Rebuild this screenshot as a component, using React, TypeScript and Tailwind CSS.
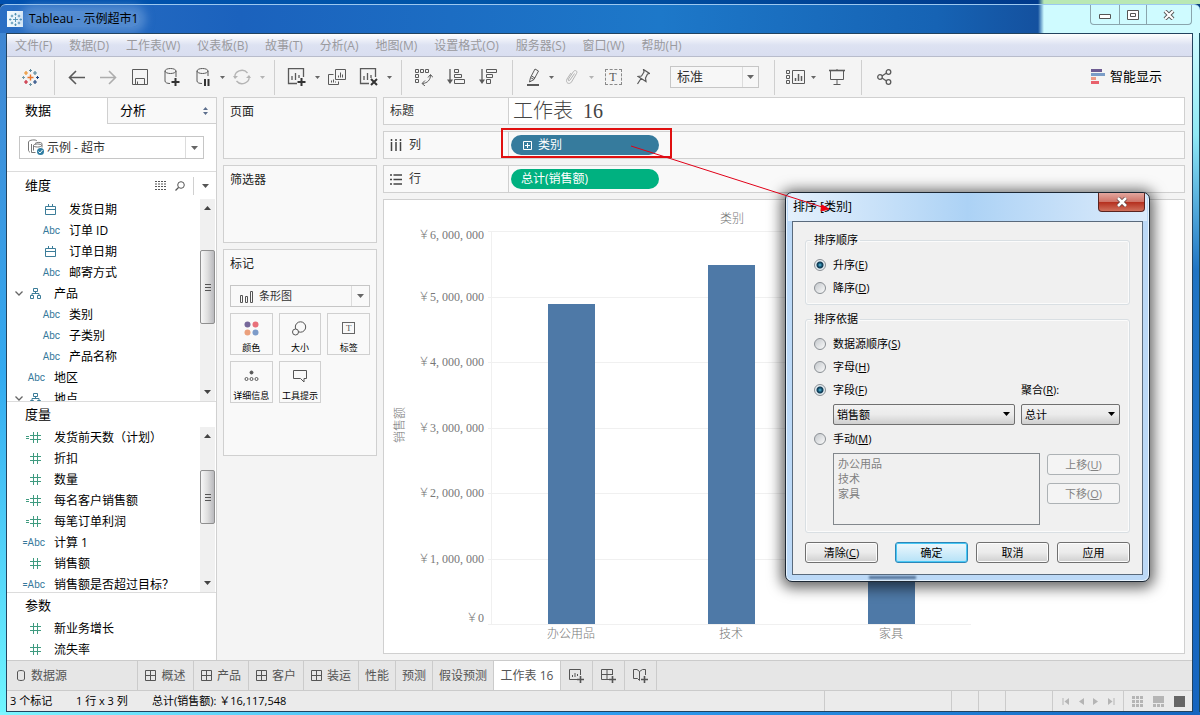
import type { ReactNode } from 'react'
import clsx from 'clsx'

type FieldKind = 'date' | 'text' | 'tree' | 'num' | 'calcNum' | 'calcText'
type Field = { name: string; kind: FieldKind; nested?: boolean }

const DIMENSIONS: Field[] = [
  { name: '发货日期', kind: 'date', nested: true },
  { name: '订单 ID', kind: 'text', nested: true },
  { name: '订单日期', kind: 'date', nested: true },
  { name: '邮寄方式', kind: 'text', nested: true },
  { name: '产品', kind: 'tree' },
  { name: '类别', kind: 'text', nested: true },
  { name: '子类别', kind: 'text', nested: true },
  { name: '产品名称', kind: 'text', nested: true },
  { name: '地区', kind: 'text' },
  { name: '地点', kind: 'tree' },
]

const MEASURES: Field[] = [
  { name: '发货前天数（计划）', kind: 'calcNum' },
  { name: '折扣', kind: 'num' },
  { name: '数量', kind: 'num' },
  { name: '每名客户销售额', kind: 'calcNum' },
  { name: '每笔订单利润', kind: 'calcNum' },
  { name: '计算 1', kind: 'calcText' },
  { name: '销售额', kind: 'num' },
  { name: '销售额是否超过目标？', kind: 'calcText' },
]

const PARAMETERS: Field[] = [
  { name: '新业务增长', kind: 'num' },
  { name: '流失率', kind: 'num' },
]

const MENU = ['文件(F)', '数据(D)', '工作表(W)', '仪表板(B)', '故事(T)', '分析(A)', '地图(M)', '设置格式(O)', '服务器(S)', '窗口(W)', '帮助(H)']

const TICKS = [
  { label: '￥6, 000, 000', y: 231, textY: 239 },
  { label: '￥5, 000, 000', y: 297, textY: 301 },
  { label: '￥4, 000, 000', y: 362, textY: 366 },
  { label: '￥3, 000, 000', y: 428, textY: 432 },
  { label: '￥2, 000, 000', y: 493, textY: 497 },
  { label: '￥1, 000, 000', y: 559, textY: 563 },
  { label: '￥0', y: 624, textY: 622 },
]

const BARS = [
  { name: '办公用品', x: 548, top: 304 },
  { name: '技术', x: 708, top: 265 },
  { name: '家具', x: 868, top: 316 },
]

/* ---------- small drawing helpers ---------- */

const Glyph = ({ w, h, className, children }: { w: number; h: number; className?: string; children: ReactNode }) => (
  <svg width={w} height={h} viewBox={`0 0 ${w} ${h}`} fill="none" stroke="currentColor" aria-hidden="true" className={clsx('shrink-0', className)}>
    {children}
  </svg>
)

const Caret = ({ className }: { className?: string }) => (
  <Glyph w={7} h={4} className={className}>
    <path d="M0 0h7L3.5 4z" fill="currentColor" stroke="none" />
  </Glyph>
)

const TableauMark = () => (
  <Glyph w={17} h={17}>
    <path d="M8.5 5.5v6M5.5 8.5h6" stroke="#e8762c" strokeWidth="1.4" />
    <path d="M8.5 0v3M7 1.5h3" stroke="#5b879b" />
    <path d="M13 2v4M11 4h4" stroke="#59879b" strokeWidth="1.2" />
    <path d="M4 2v4M2 4h4" stroke="#eb912c" strokeWidth="1.2" />
    <path d="M15.5 7v3M14 8.5h3" stroke="#1f447e" />
    <path d="M4 11v4M2 13h4" stroke="#c72035" strokeWidth="1.2" />
    <path d="M1.5 7v3M0 8.5h3" stroke="#7199a6" />
    <path d="M8.5 14v3M7 15.5h3" stroke="#7199a6" />
    <path d="M13 11v4M11 13h4" stroke="#1f447e" strokeWidth="1.2" />
  </Glyph>
)

const AppMark = () => (
  <Glyph w={15} h={15} className="text-[#4a8db0]">
    <path d="M7.5 5v5M5 7.500h5M7.500 1v2.500M6.300 2.200h2.400M7.500 11.500V14M6.300 12.800h2.400M2.200 6.300v2.400M1 7.500h2.500M12.800 6.300v2.400M11.500 7.500H14M4 2.700v2.600M2.700 4h2.600M11 2.700v2.600M9.700 4h2.600M4 9.700v2.600M2.700 11h2.600M11 9.700v2.600M9.700 11h2.600" strokeWidth=".9" />
  </Glyph>
)

const GridIcon = () => (
  <Glyph w={11} h={11}>
    <path d="M.5.5h10v10H.5zM5.5.5v10M.5 5.5h10" />
  </Glyph>
)

const FieldIcon = ({ kind }: { kind: FieldKind }) => {
  if (kind === 'text' || kind === 'calcText')
    return <span className="text-[10px] text-[#35789b] font-['Roboto',sans-serif]">{kind === 'calcText' ? '=Abc' : 'Abc'}</span>
  if (kind === 'date')
    return (
      <Glyph w={11} h={11} className="mr-1 text-[#3c7d99]">
        <path d="M.5 2.5h10v8H.5zM.5 5.5h10M3.5 0v3M7.5 0v3" />
      </Glyph>
    )
  if (kind === 'tree')
    return (
      <Glyph w={11} h={11} className="mr-1 text-[#3c7d99]">
        <path d="M3.5.5h4v3h-4zM.5 7.5h3v3h-3zM7.5 7.5h3v3h-3zM5.5 3.5v2M2 7.5v-2h7v2" />
      </Glyph>
    )
  return (
    <Glyph w={15} h={11} className="mr-1 text-[#3f9b80]">
      <path d="M7.5 0v11M11.5 0v11M4 3.5h11M4 7.5h11" />
      {kind === 'calcNum' && <path d="M0 4.5h3M0 6.5h3" />}
    </Glyph>
  )
}

/* ---------- toolbar ---------- */

const Tool = ({ label, className = 'w-8', children }: { label: string; className?: string; children: ReactNode }) => (
  <button type="button" aria-label={label} className={clsx('flex h-8 shrink-0 items-center justify-center', className)}>
    {children}
  </button>
)

const ToolCaret = ({ label, dim }: { label: string; dim?: boolean }) => (
  <button type="button" aria-label={label} className={clsx('flex h-8 w-2 shrink-0 items-center justify-center', dim ? 'text-[#b4b4b4]' : 'text-[#666]')}>
    <Glyph w={5} h={3}>
      <path d="M0 0h5L2.5 3z" fill="currentColor" stroke="none" />
    </Glyph>
  </button>
)

const Sep = ({ className = 'mr-1.5' }: { className?: string }) => <div className={clsx('h-[35px] w-px shrink-0 bg-[#cfcfcf]', className)} />

const Toolbar = () => (
  <div className="flex h-10 items-center overflow-hidden bg-[#f4f4f4] text-[#5a5a5a]">
    <Tool label="开始页面" className="w-[47px]">
      <TableauMark />
    </Tool>
    <Sep className="mr-[5px]" />
    <Tool label="撤消">
      <Glyph w={17} h={15}>
        <path d="M17 7.5H1.5M8 1L1.5 7.5 8 14" strokeWidth="1.6" />
      </Glyph>
    </Tool>
    <Tool label="重做">
      <Glyph w={17} h={15} className="text-[#adadad]">
        <path d="M0 7.5h15.5M9 1l6.5 6.5L9 14" strokeWidth="1.6" />
      </Glyph>
    </Tool>
    <Tool label="保存">
      <Glyph w={16} h={16}>
        <path d="M.5.5h15v15H.5zM3.5 15.500V9.500h9v6M5.500 15.500v-3" />
      </Glyph>
    </Tool>
    <Tool label="新建数据源">
      <Glyph w={16} h={19}>
        <ellipse cx="6.500" cy="3" rx="5.500" ry="2.500" />
        <path d="M1 3v10c0 1.500 2 2.500 5 2.500M12 3v6" />
        <path d="M11.500 10v8M7.500 14h8" stroke="#333" strokeWidth="2" />
      </Glyph>
    </Tool>
    <Tool label="暂停自动更新" className="w-[30px]">
      <Glyph w={14} h={19}>
        <ellipse cx="6.500" cy="3" rx="5.500" ry="2.500" />
        <path d="M1 3v10c0 1.500 2 2.500 5 2.500M12 3v5" />
        <path d="M9 11v7M12.500 11v7" stroke="#333" strokeWidth="2" />
      </Glyph>
    </Tool>
    <ToolCaret label="自动更新选项" />
    <Tool label="刷新">
      <Glyph w={18} h={16} className="text-[#b4b4b4]">
        <path d="M2 9a7 6.500 0 0 1 12.500-5M16 7a7 6.500 0 0 1-12.500 5" strokeWidth="1.300" />
        <path d="M0 7l2 3 3-3zM13 9l3-3 2 3z" fill="currentColor" stroke="none" />
      </Glyph>
    </Tool>
    <ToolCaret label="刷新选项" dim />
    <Sep className="mr-1.5 ml-2" />
    <Tool label="新建工作表">
      <Glyph w={20} h={18}>
        <path d="M10 15.500H1.500V.5h15V9M5 12V8M8.500 12V5M12 10V7" strokeWidth="1.300" />
        <path d="M14.500 10v8M10.500 14h8" stroke="#333" strokeWidth="2" />
      </Glyph>
    </Tool>
    <ToolCaret label="新建选项" />
    <Tool label="复制">
      <Glyph w={18} h={16}>
        <path d="M7.500.5h10v10h-10zM5.500 5.500h-5v10h10v-3M10.500 8.500v-2M12.500 8.500v-5M14.500 8.500v-3M3.500 13.500v-2M5.500 13.500v-3M7.500 13.500v-1" />
      </Glyph>
    </Tool>
    <Tool label="清除">
      <Glyph w={20} h={18}>
        <path d="M10 15.500H1.500V.5h15V9M5 12V8M8.500 12V5M12 10V7" strokeWidth="1.300" />
        <path d="M12 11l6 6M18 11l-6 6" stroke="#333" strokeWidth="2" />
      </Glyph>
    </Tool>
    <ToolCaret label="清除选项" />
    <Sep className="mr-1.5 ml-2" />
    <Tool label="交换行和列">
      <Glyph w={18} h={17}>
        <path d="M.5.5h3v3h-3zM5.500.5h3v3h-3zM10.500.5h3v3h-3zM.5 5.500h3v3h-3zM.5 10.500h3v3h-3zM15.500 6c0 5-3 8-8 8.500M13 8.500L15.500 5.500 18 8.500M10 11.500L7 14.500l3 2.500" />
      </Glyph>
    </Tool>
    <Tool label="升序排序">
      <Glyph w={18} h={16}>
        <path d="M3 0v13" strokeWidth="1.300" />
        <path d="M0 10.500h6L3 15z" fill="currentColor" stroke="none" />
        <path d="M7.500.5h4v3h-4zM7.500 5.500h7v3h-7zM7.500 10.500h10v4h-10z" />
      </Glyph>
    </Tool>
    <Tool label="降序排序">
      <Glyph w={18} h={16}>
        <path d="M3 0v13" strokeWidth="1.300" />
        <path d="M0 10.500h6L3 15z" fill="currentColor" stroke="none" />
        <path d="M7.500.5h10v3h-10zM7.500 5.500h6v3h-6zM7.500 10.500h4v4h-4z" />
      </Glyph>
    </Tool>
    <Sep className="mr-1.5 ml-2" />
    <Tool label="突出显示" className="w-7">
      <Glyph w={13} h={18}>
        <path d="M3.500 9.500L8 1l3.500 2-4.500 8.500zM3.500 9.500L2.500 14 7 11.500M4.500 8L8 10" />
        <path d="M0 17h12" strokeWidth="2" />
      </Glyph>
    </Tool>
    <ToolCaret label="突出显示选项" />
    <Tool label="组成员">
      <Glyph w={13} h={16} className="text-[#b4b4b4]">
        <path d="M9.500 4.500L5 11c-1 1.500-2.500.5-1.500-1L8.500 2.500c1.500-2 4.500-.5 3 2L6.500 13c-2 3-6.500 1-4.500-3l4-6" />
      </Glyph>
    </Tool>
    <ToolCaret label="组选项" dim />
    <Tool label="显示标记标签" className="w-9">
      <span className="flex h-4 w-[17px] items-center justify-center border border-dashed border-[#8a8a8a] text-xs font-['Liberation_Serif',serif]">T</span>
    </Tool>
    <Tool label="固定" className="w-6">
      <Glyph w={13} h={16}>
        <path d="M6.500.5l6 4-2 .5-2 4 .5 3.500-8-5 3.500-.5 2.500-4zM4 9.500L.5 15" strokeWidth="1.200" />
      </Glyph>
    </Tool>
    <div className="relative ml-[15px] w-[89px] shrink-0">
      <select aria-label="适合" className="block h-[22px] w-full appearance-none border border-[#c6c6c6] bg-[#f7f7f7] pl-1.5 text-[13px] text-[#333]">
        <option>标准</option>
      </select>
      <span className="pointer-events-none absolute inset-y-px right-px flex w-4 items-center justify-center border-l border-[#dcdcdc] text-[#666]">
        <Caret />
      </span>
    </div>
    <Sep className="mr-1.5 ml-[15px]" />
    <Tool label="显示/隐藏卡" className="w-7">
      <Glyph w={19} h={15}>
        <path d="M.5.5h3v3h-3zM.5 5.500h3v3h-3zM.5 10.500h3v3h-3zM6.500.5h12v13h-12z" />
        <path d="M9.500 11V8M12.500 11V4M15.500 11V6" strokeWidth="1.500" />
      </Glyph>
    </Tool>
    <ToolCaret label="卡选项" />
    <Tool label="演示模式" className="w-10">
      <Glyph w={16} h={16}>
        <path d="M0 1.500h16" strokeWidth="1.600" />
        <path d="M1.500 2v8.500h13V2M8 10.500v5M4.500 15.500h7M8 0v1" />
      </Glyph>
    </Tool>
    <Sep className="mr-1.5 ml-1" />
    <Tool label="共享">
      <Glyph w={15} h={16}>
        <circle cx="3" cy="8" r="2.300" strokeWidth="1.300" />
        <circle cx="11.500" cy="3" r="2.300" strokeWidth="1.300" />
        <circle cx="11.500" cy="13" r="2.300" strokeWidth="1.300" />
        <path d="M5 7l4.500-3M5 9l4.500 3" strokeWidth="1.300" />
      </Glyph>
    </Tool>
    <button type="button" className="mr-[30px] ml-auto flex shrink-0 items-center gap-[5px] text-[13px] text-black">
      <Glyph w={14} h={15} className="text-transparent">
        <path d="M0 0h11v3H0z" fill="#6d5b92" />
        <path d="M0 4h14v3H0z" fill="#7b9dc7" />
        <path d="M0 8h5v3H0z" fill="#ec9a86" />
        <path d="M0 12h8v3H0z" fill="#e8606b" />
      </Glyph>
      智能显示
    </button>
  </div>
)

/* ---------- data pane ---------- */

const FieldRow = ({ field }: { field: Field }) => (
  <li className="flex h-[21px] shrink-0 items-center">
    <span className="flex w-5 shrink-0 justify-center text-[#666]">
      {field.kind === 'tree' && (
        <Glyph w={8} h={5} className="ml-1">
          <path d="M.5.5L4 4 7.500.5" strokeWidth="1.300" />
        </Glyph>
      )}
    </span>
    <span className={clsx('flex shrink-0 items-center justify-end', field.nested ? 'w-[33px]' : 'w-[18px]')}>
      <FieldIcon kind={field.kind} />
    </span>
    <span className="ml-[9px] whitespace-nowrap">{field.name}</span>
  </li>
)

const ScrollBar = ({ thumb, offset }: { thumb: string; offset: string }) => (
  <div className="flex w-[15px] shrink-0 flex-col items-center bg-[#f0f0f0] text-[#444]">
    <div className="flex h-[18px] shrink-0 items-center">
      <Glyph w={7} h={4}>
        <path d="M0 4h7L3.500 0z" fill="currentColor" stroke="none" />
      </Glyph>
    </div>
    <div className={clsx('flex w-full shrink-0 flex-col items-center justify-center gap-[2px] rounded-[2px] border border-[#8f8f8f] bg-linear-to-r from-[#f7f7f7] via-[#dedede] to-[#b9b9bd]', offset, thumb)}>
      <span className="h-px w-1.5 bg-[#555]" />
      <span className="h-px w-1.5 bg-[#555]" />
      <span className="h-px w-1.5 bg-[#555]" />
    </div>
    <div className="mt-auto flex h-[18px] shrink-0 items-center">
      <Caret />
    </div>
  </div>
)

const DataPane = () => (
  <aside className="flex w-[210px] shrink-0 flex-col border-r border-[#d0d0d0] bg-white text-black">
    <div className="flex h-[27px] shrink-0 border-t border-[#d0d0d0] text-[13px]">
      <button type="button" className="w-[100px] pl-[18px] text-left">数据</button>
      <button type="button" className="flex flex-1 items-center justify-between border-b border-l border-[#d0d0d0] bg-[#f9f9f9] pr-2 pl-3">
        分析
        <Glyph w={5} h={8} className="text-[#5d6f8d]">
          <path d="M0 3h5L2.500 0zM0 5h5L2.500 8z" fill="currentColor" stroke="none" />
        </Glyph>
      </button>
    </div>
    <div className="flex h-[47px] shrink-0 items-center pl-3">
      <button type="button" className="flex h-[23px] w-[185px] items-center border border-[#c6c6c6] pl-2 text-[#333]">
        <Glyph w={17} h={17} className="mr-0.5 text-[#777]">
          <path d="M2 13c-1 0-1.500-1-1.500-2V3C.5 1 8 0 9 2M3.500 5v8.500h4M7 4.500c2-1.500 6-1.500 7 0v4M5.500 6.500c0-2 8-2 8 0s-8 2-8 0v5" />
          <circle cx="12.500" cy="12.500" r="3.500" fill="#2f7ea3" stroke="none" />
          <path d="M10.500 12.500l1.500 1.500 2.500-3" stroke="#fff" />
        </Glyph>
        示例 - 超市
        <span className="ml-auto flex h-full w-[18px] items-center justify-center border-l border-[#dcdcdc] text-[#666]">
          <Caret />
        </span>
      </button>
    </div>
    <section className="flex h-[230px] shrink-0 flex-col border-t border-[#dcdcdc]">
      <div className="flex h-[27px] shrink-0 items-center pr-[7px] pl-[18px] text-[#555]">
        <h2 className="text-[13px] text-black">维度</h2>
        <Glyph w={12} h={9} className="ml-auto">
          <path d="M0 .5h12M0 3h12M0 5.500h12M0 8.500h12" strokeDasharray="2 1" />
        </Glyph>
        <Glyph w={10} h={10} className="ml-2">
          <circle cx="6" cy="4" r="3.300" />
          <path d="M3.500 6.500L.5 9.500" strokeWidth="1.300" />
        </Glyph>
        <span className="mr-2 ml-2 h-[18px] w-px bg-[#d0d0d0]" />
        <Caret />
      </div>
      <div className="flex min-h-0 flex-1 pr-px">
        <ul className="flex min-w-0 flex-1 flex-col overflow-hidden">
          {DIMENSIONS.map((f) => <FieldRow key={f.name} field={f} />)}
        </ul>
        <ScrollBar offset="mt-[33px]" thumb="h-[74px]" />
      </div>
    </section>
    <section className="flex h-[191px] shrink-0 flex-col border-t border-[#dcdcdc]">
      <h2 className="h-[25px] shrink-0 pl-[18px] text-[13px] leading-6">度量</h2>
      <div className="flex min-h-0 flex-1 pr-px">
        <ul className="flex min-w-0 flex-1 flex-col overflow-hidden">
          {MEASURES.map((f) => <FieldRow key={f.name} field={f} />)}
        </ul>
        <ScrollBar offset="mt-[25px]" thumb="h-[54px]" />
      </div>
    </section>
    <section className="flex-1 border-t border-[#dcdcdc]">
      <h2 className="h-[25px] pl-[18px] text-[13px] leading-6">参数</h2>
      <ul>
        {PARAMETERS.map((f) => <FieldRow key={f.name} field={f} />)}
      </ul>
    </section>
  </aside>
)

/* ---------- cards and shelves ---------- */

const MarkButton = ({ label, children }: { label: string; children: ReactNode }) => (
  <button type="button" className="flex h-[42px] flex-col items-center justify-between border border-[#d0d0d0] pt-1.5 text-[#555]">
    <span className="flex h-4 items-center">{children}</span>
    <span className="text-[9px] leading-[13px] whitespace-nowrap text-black">{label}</span>
  </button>
)

const Cards = () => (
  <div className="flex w-[154px] shrink-0 flex-col gap-1.5">
    <section className="h-[62px] border border-[#d0d0d0] bg-[#f9f9f9] px-1.5 pt-1.5">页面</section>
    <section className="h-[78px] border border-[#d0d0d0] bg-[#f9f9f9] px-1.5 pt-1.5">筛选器</section>
    <section className="h-[207px] border border-[#d0d0d0] bg-[#f9f9f9] px-1.5 pt-1.5">
      <h2>标记</h2>
      <div className="relative mt-[13px]">
        <select aria-label="标记类型" className="block h-[22px] w-full appearance-none border border-[#c6c6c6] bg-[#f9f9f9] pl-7 text-[11px] text-[#333]">
          <option>条形图</option>
        </select>
        <span className="pointer-events-none absolute inset-y-0 left-2.5 flex items-center text-[#555]">
          <Glyph w={14} h={13}>
            <path d="M.5 5.500h2v7h-2zM5.500 6.500h2v6h-2zM10.500 1.500h2v11h-2z" />
          </Glyph>
        </span>
        <span className="pointer-events-none absolute inset-y-px right-px flex w-[18px] items-center justify-center border-l border-[#dcdcdc] text-[#666]">
          <Caret />
        </span>
      </div>
      <div className="mt-1.5 grid grid-cols-3 gap-1.5">
        <MarkButton label="颜色">
          <Glyph w={15} h={15} className="text-transparent">
            <circle cx="3.500" cy="3.500" r="3" fill="#76689a" />
            <circle cx="11.500" cy="3.500" r="3" fill="#e8707a" />
            <circle cx="3.500" cy="11.500" r="3" fill="#eba07c" />
            <circle cx="11.500" cy="11.500" r="3" fill="#7c9bc9" />
          </Glyph>
        </MarkButton>
        <MarkButton label="大小">
          <Glyph w={15} h={15}>
            <circle cx="8.500" cy="6" r="5.200" />
            <circle cx="3.500" cy="11" r="3" fill="#f9f9f9" />
          </Glyph>
        </MarkButton>
        <MarkButton label="标签">
          <span className="flex h-3 w-[13px] items-center justify-center border border-[#666] text-[9px] leading-none font-['Liberation_Serif',serif]">T</span>
        </MarkButton>
        <MarkButton label="详细信息">
          <Glyph w={15} h={12}>
            <circle cx="7.500" cy="2.500" r="1.500" fill="currentColor" />
            <circle cx="2.500" cy="9" r="1.500" />
            <circle cx="7.500" cy="9" r="1.500" />
            <circle cx="12.500" cy="9" r="1.500" />
          </Glyph>
        </MarkButton>
        <MarkButton label="工具提示">
          <Glyph w={14} h={14}>
            <path d="M.5 1.500h13v8h-2.500v3.500l-3.500-3.500h-7z" />
          </Glyph>
        </MarkButton>
      </div>
    </section>
  </div>
)

const Shelf = ({ head, plain, children }: { head: ReactNode; plain?: boolean; children: ReactNode }) => (
  <div className="flex h-7 shrink-0 border border-[#d0d0d0] bg-[#f9f9f9]">
    <div className="flex w-[125px] shrink-0 items-center gap-[7px] border-r border-[#d0d0d0] pl-1.5 text-[#333]">{head}</div>
    <div className={clsx('flex flex-1 items-center pl-0.5', plain && 'bg-white')}>{children}</div>
  </div>
)

const BarChart = () => (
  <svg width="800" height="453" viewBox="384 200 800 453" className="font-['Liberation_Serif','Noto_Sans_CJK_SC',serif]" fontSize="12" fontWeight="300" fill="#777">
    <text x="732" y="223" textAnchor="middle">类别</text>
    <text transform="translate(404 425) rotate(-90)" textAnchor="middle">销售额</text>
    {TICKS.map((t) => (
      <g key={t.label}>
        <text x="484" y={t.textY} textAnchor="end">{t.label}</text>
        <path d={`M488 ${t.y + 0.5}H971`} stroke="#f0f0f0" />
      </g>
    ))}
    <path d="M491.500 231V624" stroke="#f0f0f0" />
    {BARS.map((b) => (
      <g key={b.name}>
        <rect x={b.x} y={b.top} width="47" height={624 - b.top} fill="#4e79a7" />
        <text x={b.x + 23} y="638" textAnchor="middle">{b.name}</text>
      </g>
    ))}
  </svg>
)

const Workspace = () => (
  <main className="flex min-w-0 flex-1 flex-col gap-1.5">
    <Shelf head="标题" plain>
      <h1 className="pl-0.5 text-xl leading-6 font-light whitespace-pre text-[#444] font-['Liberation_Serif','Noto_Sans_CJK_SC',serif]">{'工作表  16'}</h1>
    </Shelf>
    <Shelf
      head={
        <>
          <Glyph w={12} h={12} className="text-[#444]">
            <path d="M1.500 0v2M1.500 3v9M6 0v2M6 3v9M10.500 0v2M10.500 3v9" strokeWidth="1.500" />
          </Glyph>
          列
        </>
      }
    >
      <button type="button" className="flex h-5 w-[148px] items-center gap-1.5 rounded-full bg-[#367b9d] pl-3 text-white">
        <Glyph w={9} h={9}>
          <path d="M.5.5h8v8h-8zM4.500 2v5M2 4.500h5" />
        </Glyph>
        类别
      </button>
    </Shelf>
    <Shelf
      head={
        <>
          <Glyph w={12} h={11} className="text-[#444]">
            <path d="M0 1h2M3.500 1H12M0 5.500h2M3.500 5.500H12M0 10h2M3.500 10H12" strokeWidth="1.500" />
          </Glyph>
          行
        </>
      }
    >
      <button type="button" className="flex h-5 w-[148px] items-center rounded-full bg-[#00b180] pl-2.5 text-white">总计(销售额)</button>
    </Shelf>
    <div className="flex-1 overflow-hidden border border-[#d0d0d0] bg-white">
      <BarChart />
    </div>
  </main>
)

/* ---------- bottom of the window ---------- */

const SheetTab = ({ name, width, dashboard, active }: { name: string; width: string; dashboard?: boolean; active?: boolean }) => (
  <button type="button" className={clsx('flex shrink-0 items-center justify-center gap-[5px] border-r border-[#cbcbcb] whitespace-nowrap', width, active && 'bg-white')}>
    {dashboard && <GridIcon />}
    {name}
  </button>
)

const SheetTabs = () => (
  <div className="flex h-[30px] shrink-0 border-t border-[#cbcbcb] bg-[#e6e6e6] text-[#555]">
    <button type="button" className="flex w-[131px] shrink-0 items-center gap-1.5 border-r border-[#cbcbcb] pl-2.5">
      <Glyph w={8} h={11}>
        <path d="M.5 2v7c0 2 7 2 7 0V2c0-2-7-2-7 0z" />
      </Glyph>
      数据源
    </button>
    <SheetTab name="概述" width="w-14" dashboard />
    <SheetTab name="产品" width="w-[55px]" dashboard />
    <SheetTab name="客户" width="w-[55px]" dashboard />
    <SheetTab name="装运" width="w-[55px]" dashboard />
    <SheetTab name="性能" width="w-[37px]" />
    <SheetTab name="预测" width="w-[37px]" />
    <SheetTab name="假设预测" width="w-[61px]" />
    <SheetTab name="工作表 16" width="w-[67px]" active />
    <button type="button" aria-label="新建工作表" className="flex w-8 items-center justify-center border-r border-[#cbcbcb]">
      <Glyph w={16} h={16}>
        <path d="M8 11.500H.5V1.500h11V7M3.500 9V7M6 9V5M8.500 8V6" />
        <path d="M11.500 8v7M8 11.500h7" strokeWidth="1.600" />
      </Glyph>
    </button>
    <button type="button" aria-label="新建仪表板" className="flex w-8 items-center justify-center border-r border-[#cbcbcb]">
      <Glyph w={16} h={16}>
        <path d="M8 11.500H.5V1.500h11V7M6 1.500v10M.5 6.500h11" />
        <path d="M11.500 8v7M8 11.500h7" strokeWidth="1.600" />
      </Glyph>
    </button>
    <button type="button" aria-label="新建故事" className="flex w-8 items-center justify-center border-r border-[#cbcbcb]">
      <Glyph w={16} h={16}>
        <path d="M6.500 3.500L4 1.500H.5v9h4l2 2zM6.500 3.500l3-2h3V7" />
        <path d="M11.500 8v7M8 11.500h7" strokeWidth="1.600" />
      </Glyph>
    </button>
  </div>
)

const StatusBar = () => (
  <footer className="flex h-[21px] shrink-0 items-stretch border-t border-[#cbcbcb] bg-[#ebebeb] text-[11px] leading-5 whitespace-nowrap text-black">
    <span className="w-[69px] shrink-0 pl-[3px]">3 个标记</span>
    <span className="w-[76px] shrink-0">1 行 x 3 列</span>
    <span className="flex-1">总计(销售额): ￥16,117,548</span>
    <span className="w-[127px] border-l border-[#cbcbcb]" />
    <span className="w-[27px] border-l border-[#cbcbcb]" />
    <span className="w-[27px] border-l border-[#cbcbcb]" />
    <span className="w-[47px] border-l border-[#cbcbcb]" />
    <span className="flex w-[71px] items-center justify-around border-l border-[#cbcbcb] px-1 text-[#b5b5b5]">
      <Glyph w={8} h={7}><path d="M1 0v7" /><path d="M7 0v7L2.500 3.500z" fill="currentColor" stroke="none" /></Glyph>
      <Glyph w={5} h={7}><path d="M5 0v7L0 3.500z" fill="currentColor" stroke="none" /></Glyph>
      <Glyph w={5} h={7}><path d="M0 0v7l5-3.500z" fill="currentColor" stroke="none" /></Glyph>
      <Glyph w={8} h={7}><path d="M7 0v7" /><path d="M1 0v7l4.500-3.500z" fill="currentColor" stroke="none" /></Glyph>
    </span>
    <span className="flex w-[69px] items-center justify-between border-l border-[#cbcbcb] pr-[7px] pl-2 text-[#b5b5b5]">
      <Glyph w={11} h={11}><path d="M0 1.500h11M0 5.500h11M0 9.500h11" strokeWidth="3" strokeDasharray="3 1" /></Glyph>
      <Glyph w={11} h={11}><path d="M0 3.500h11" strokeWidth="7" /><path d="M0 9.500h11" strokeWidth="3" strokeDasharray="3 1" /></Glyph>
      <span className="size-[11px] bg-[#666]" />
    </span>
  </footer>
)

/* ---------- sort dialog ---------- */

const Radio = ({ name, label, hot, checked }: { name: string; label: string; hot: string; checked?: boolean }) => (
  <label className="flex h-[23px] items-center gap-[7px]">
    <input
      type="radio"
      name={name}
      defaultChecked={checked}
      className="size-3 shrink-0 appearance-none rounded-full border border-[#8a8f94] bg-linear-to-br from-[#c4c8cc] to-[#fbfbfb] checked:bg-[radial-gradient(circle_at_center,#5cc3e0_0,#14506f_2px,#123a52_3px,#e4edf2_4px)]"
    />
    <span>{label}(<u>{hot}</u>)</span>
  </label>
)

const DialogSelect = ({ id, label, value, width }: { id: string; label?: string; value: string; width: string }) => (
  <div className={clsx('relative', width)}>
    <select id={id} aria-label={label} className="block h-[21px] w-full appearance-none rounded-[2px] border border-[#707070] bg-linear-to-b from-[#f2f2f2] via-[#ebebeb] to-[#cfcfcf] pl-[3px]">
      <option>{value}</option>
    </select>
    <Caret className="pointer-events-none absolute top-2 right-[5px]" />
  </div>
)

const DialogButton = ({ label, hot, className, primary, disabled }: { label: string; hot?: string; className?: string; primary?: boolean; disabled?: boolean }) => (
  <button
    type="button"
    disabled={disabled}
    className={clsx(
      'h-[21px] w-[73px] shrink-0 rounded-[3px] border leading-[19px]',
      primary && 'border-[#2c86b8] bg-linear-to-b from-[#eef8fd] to-[#b5e2f7] shadow-[inset_0_0_0_1px_#48c8f5]',
      disabled && 'border-[#adb2b5] bg-[#f4f4f4] text-[#838383]',
      !primary && !disabled && 'border-[#707070] bg-linear-to-b from-[#f2f2f2] via-[#ebebeb] to-[#cfcfcf] shadow-[inset_0_0_0_1px_#fcfcfc]',
      className,
    )}
  >
    {label}
    {hot && <>(<u>{hot}</u>)</>}
  </button>
)

const SortDialog = () => (
  <div
    role="dialog"
    aria-label="排序 [类别]"
    className="absolute top-[192px] left-[785px] w-[365px] rounded-[7px] border border-[#1c2733] bg-[#bcd9f7] px-1.5 pb-1.5 text-[11px] leading-[14px] text-black shadow-[0_2px_14px_4px_rgba(0,0,0,0.6),inset_0_0_0_1px_#e8f4ff]"
  >
    <div className="-mx-1 flex h-7 items-start justify-between rounded-t-[6px] bg-linear-to-r from-[#e4f0fc] via-[#acd2f5] to-[#dcebfb] pr-0.5 pl-[5px]">
      <span className="text-xs leading-7">排序 [类别]</span>
      <button type="button" aria-label="关闭" className="flex h-[19px] w-[47px] items-center justify-center rounded-b-[4px] border border-t-0 border-[#5a2320] bg-[linear-gradient(180deg,#e3a79f_0,#cf7468_48%,#b5301f_52%,#d0705c_100%)] text-white">
        <Glyph w={12} h={10}>
          <path d="M2 1l8 8M10 1L2 9" stroke="#5a3a3a" strokeWidth="4" />
          <path d="M2 1l8 8M10 1L2 9" strokeWidth="2.600" />
        </Glyph>
      </button>
    </div>
    <div className="border border-[#5a6a7c] bg-[#f0f0f0] px-3 pt-[11px] pb-[11px]">
      <fieldset className="h-[72px] rounded-[3px] border border-[#d9dfe3] pl-2 shadow-[inset_0_0_0_1px_#fbfbfb]">
        <legend className="-ml-0.5 px-0.5">排序顺序</legend>
        <div className="pt-1.5">
          <Radio name="order" label="升序" hot="E" checked />
          <Radio name="order" label="降序" hot="D" />
        </div>
      </fieldset>
      <fieldset className="mt-[7px] h-[221px] rounded-[3px] border border-[#d9dfe3] pr-[9px] pl-2 shadow-[inset_0_0_0_1px_#fbfbfb]">
        <legend className="-ml-0.5 px-0.5">排序依据</legend>
        <div className="pt-1.5">
          <Radio name="by" label="数据源顺序" hot="S" />
          <Radio name="by" label="字母" hot="H" />
          <div className="flex items-center justify-between">
            <Radio name="by" label="字段" hot="F" checked />
            <label htmlFor="aggregation" className="w-[99px]">聚合(<u>R</u>):</label>
          </div>
        </div>
        <div className="mt-[3px] flex justify-between pl-[19px]">
          <DialogSelect id="sort-field" label="字段" value="销售额" width="w-[182px]" />
          <DialogSelect id="aggregation" value="总计" width="w-[99px]" />
        </div>
        <div className="mt-0.5">
          <Radio name="by" label="手动" hot="M" />
        </div>
        <div className="mt-[3px] flex justify-between pl-[19px]">
          <select multiple size={4} disabled aria-label="手动顺序" className="h-[72px] w-[207px] appearance-none overflow-hidden border border-[#82878c] pt-px pl-1 text-[#838383]">
            <option className="h-[15px]">办公用品</option>
            <option className="h-[15px]">技术</option>
            <option className="h-[15px]">家具</option>
          </select>
          <div className="flex flex-col gap-2 pt-px">
            <DialogButton label="上移" hot="U" disabled />
            <DialogButton label="下移" hot="O" disabled />
          </div>
        </div>
      </fieldset>
      <div className="mt-[9px] flex gap-2">
        <DialogButton label="清除" hot="C" className="mr-[9px]" />
        <DialogButton label="确定" primary />
        <DialogButton label="取消" />
        <DialogButton label="应用" />
      </div>
    </div>
    {/* the bar behind shows faintly through the glass edge */}
    <div className="absolute bottom-0.5 left-[83px] h-[3px] w-[47px] bg-[#4e6f96] blur-[1px]" />
  </div>
)

/* red frame on the pill and the arrow that leads to the dialog */
const Callout = () => (
  <svg width="340" height="90" viewBox="500 128 340 90" fill="none" stroke="#e01010" className="pointer-events-none absolute top-32 left-[500px]" aria-hidden="true">
    <path d="M502 129h169v28H502z" strokeWidth="2" />
    <path d="M631 146L822 207" stroke="#e00018" />
    <path d="M822 205l7 4-8 2z" fill="#f00010" stroke="#f00010" />
  </svg>
)

/* ---------- window frame ---------- */

const TitleBar = () => (
  <header className="flex h-[29px] shrink-0 items-center rounded-t-[6px] border-t border-[#9cc8f0] bg-[linear-gradient(90deg,#2a6fc4_0,#1b62bd_20%,#1d78c9_55%,#1663b4_78%,#14519f_86.500%,#cffbff_87%)] pl-[7px]">
    <span className="flex size-4 items-center justify-center bg-[#eef8fd]">
      <AppMark />
    </span>
    <span className="ml-1 rounded-full bg-[#7fabe0]/50 px-0.5 text-xs text-black shadow-[0_0_8px_6px_rgba(127,171,224,0.5)]">Tableau - 示例超市1</span>
    <div className="mr-2 ml-auto flex h-5 self-start overflow-hidden rounded-b-[4px] border border-t-0 border-[#8aa5ad] text-[#555]">
      <button type="button" aria-label="最小化" className="flex w-7 items-center justify-center pt-1">
        <Glyph w={12} h={5}><path d="M.5.5h11v4H.5z" fill="#fff" /></Glyph>
      </button>
      <button type="button" aria-label="最大化" className="flex w-7 items-center justify-center border-x border-[#8aa5ad]">
        <Glyph w={12} h={10}><path d="M.5.5h11v9H.5zM3.500 3.500h5v3h-5z" fill="#fff" /></Glyph>
      </button>
      <button type="button" aria-label="关闭窗口" className="flex w-11 items-center justify-center">
        <Glyph w={12} h={10}>
          <path d="M2 1l8 8M10 1L2 9" strokeWidth="4" />
          <path d="M2 1l8 8M10 1L2 9" stroke="#fff" strokeWidth="2.200" />
        </Glyph>
      </button>
    </div>
  </header>
)

export default function App() {
  return (
    <div className="relative flex min-h-screen w-full flex-col overflow-hidden bg-[#0a3f7c] text-xs text-[#222] [text-spacing-trim:space-all] font-['Open_Sans','Noto_Sans_CJK_SC',sans-serif]">
      <div className="h-1 shrink-0 bg-[linear-gradient(90deg,#0050ae_0,#0055a8_40%,#003a8c_86.500%,#b9e8b4_87%)]" />
      <TitleBar />
      <div className="flex flex-1">
        <div className="w-1.5 shrink-0 bg-linear-to-b from-[#3f86d2] via-[#33aaf0] to-[#6ff6ff]" />
        <div className="flex min-w-0 flex-1 flex-col border border-[#23435f] bg-[#f4f4f4]">
          <nav className="flex h-[23px] shrink-0 items-center gap-[17px] border-b border-[#b8bccb] bg-linear-to-b from-white via-[#dde2f2] to-[#d9def0] pt-0.5 pl-2 whitespace-nowrap text-[#9a9a9e]">
            {MENU.map((m) => <a key={m} href="#">{m}</a>)}
          </nav>
          <Toolbar />
          <div className="flex flex-1 gap-1.5 pr-[7px]">
            <DataPane />
            <Cards />
            <div className="flex min-w-0 flex-1 pb-1.5">
              <Workspace />
            </div>
          </div>
          <SheetTabs />
          <StatusBar />
        </div>
        <div className="w-[7px] shrink-0 border-r border-[#1b4a5c] bg-[linear-gradient(180deg,#cffbff_0,#8fe9f5_15%,#1f74c4_35%,#1565c0_100%)]" />
      </div>
      <div className="h-1 shrink-0 bg-linear-to-r from-[#7ef6ff] via-[#2f9df0] to-[#1565c0]" />
      <SortDialog />
      <Callout />
    </div>
  )
}
